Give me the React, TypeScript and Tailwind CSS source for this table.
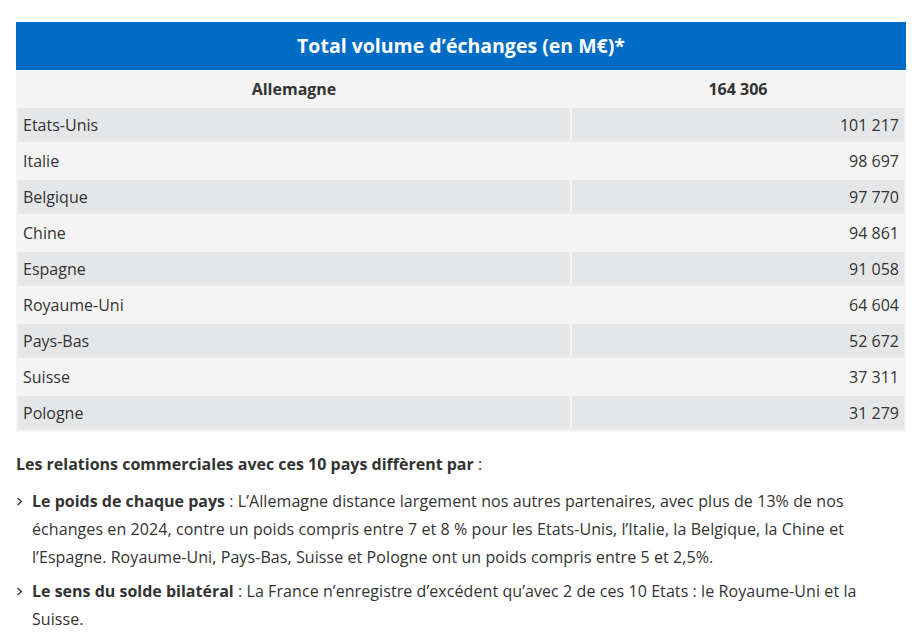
import React from "react";

const rows: [string, string][] = [
  ["Etats-Unis", "101 217"],
  ["Italie", "98 697"],
  ["Belgique", "97 770"],
  ["Chine", "94 861"],
  ["Espagne", "91 058"],
  ["Royaume-Uni", "64 604"],
  ["Pays-Bas", "52 672"],
  ["Suisse", "37 311"],
  ["Pologne", "31 279"],
];

function Chevron() {
  return (
    <svg width="7" height="9" viewBox="0 0 7 9" className="absolute left-0 top-[10px]">
      <polyline points="1.5,1 5.5,4.5 1.5,8" fill="none" stroke="#333" strokeWidth="1.3" />
    </svg>
  );
}

export default function App() {
  return (
    <div className="bg-white w-[919px] h-[633px] overflow-hidden pl-4 pr-[13px] pt-[22px] text-[#333] text-[16px]" style={{ fontFamily: '"Open Sans", "Noto Sans", sans-serif' }}>
      <div className="bg-[#006cc6] h-[48px] flex items-center justify-center text-white font-bold text-[19.5px]">
        Total volume d’échanges (en M€)*
      </div>
      <table className="w-full border-separate border-spacing-[2px] bg-[#f4f4f4] table-fixed">
        <colgroup>
          <col className="w-[552px]" />
          <col />
        </colgroup>
        <tbody>
          <tr className="h-[34px]">
            <th className="font-bold text-center p-0">Allemagne</th>
            <th className="font-bold text-center p-0">164 306</th>
          </tr>
          {rows.map(([n, v], i) => (
            <tr key={n} className={`h-[34px] ${i % 2 === 0 ? "bg-[#e5e6e8]" : ""}`}>
              <td className="px-[5px] py-0 text-left">{n}</td>
              <td className="px-[5px] py-0 text-right">{v}</td>
            </tr>
          ))}
        </tbody>
      </table>
      <p className="mt-[18px] leading-[28px]">
        <b>Les relations commerciales avec ces 10 pays diffèrent par</b> :
      </p>
      <ul className="mt-[9px] leading-[28px] tracking-[0.08px]">
        <li className="relative pl-4">
          <Chevron />
          <b className="tracking-normal">Le poids de chaque pays</b> : L’Allemagne distance largement nos autres partenaires, avec plus de 13% de nos échanges en 2024, contre un poids compris entre 7 et 8 % pour les Etats-Unis, l’Italie, la Belgique, la Chine et l’Espagne. Royaume-Uni, Pays-Bas, Suisse et Pologne ont un poids compris entre 5 et 2,5%.
        </li>
        <li className="relative pl-4 mt-[6px]">
          <Chevron />
          <b className="tracking-normal">Le sens du solde bilatéral</b> : La France n’enregistre d’excédent qu’avec 2 de ces 10 Etats : le Royaume-Uni et la Suisse.
        </li>
      </ul>
    </div>
  );
}
